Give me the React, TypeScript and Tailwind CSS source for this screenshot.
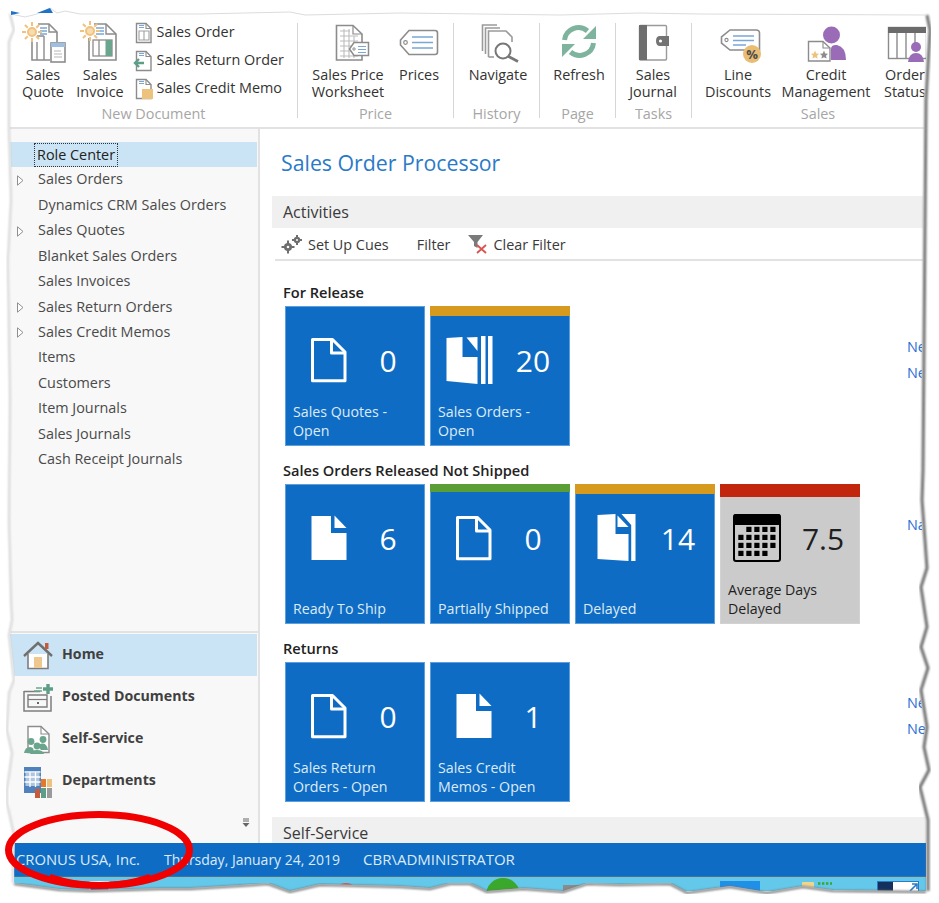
import type { ReactNode } from "react";

const navItems = [
  { label: "Role Center", active: true },
  { label: "Sales Orders", arrow: true },
  { label: "Dynamics CRM Sales Orders" },
  { label: "Sales Quotes", arrow: true },
  { label: "Blanket Sales Orders" },
  { label: "Sales Invoices" },
  { label: "Sales Return Orders", arrow: true },
  { label: "Sales Credit Memos", arrow: true },
  { label: "Items" },
  { label: "Customers" },
  { label: "Item Journals" },
  { label: "Sales Journals" },
  { label: "Cash Receipt Journals" },
];

const G = "#8c8c8c";
const B = "#7aa7d6";

function Sun({ x, y }: { x: number; y: number }) {
  const rays = [0, 45, 90, 135, 180, 225, 270, 315];
  return (
    <g stroke="#f0c27e" strokeWidth="2">
      {rays.map((r) => (
        <line key={r} x1={x} y1={y - 6} x2={x} y2={y - 10} transform={`rotate(${r} ${x} ${y})`} />
      ))}
      <circle cx={x} cy={y} r="4" fill="#f6dcae" />
    </g>
  );
}

function Box({ view, w = 48, h = 48, children }: { view: string; w?: number; h?: number; children: ReactNode }) {
  return (
    <svg width={w} height={h} viewBox={view} fill="none" className="shrink-0 overflow-visible">
      {children}
    </svg>
  );
}

function QuoteIcon() {
  return (
    <Box view="19 19 48 48">
      <path d="M38 24H49L57 32V42M50 60H32V38" stroke={G} strokeWidth="1.6" fill="#fff" />
      <path d="M49 24V32H57" stroke={G} strokeWidth="1.4" />
      <path d="M37 42V60M44 36V60M44 36H37" stroke={G} strokeWidth="1.4" />
      <path d="M40 28H47M40 31H47M40 34H47" stroke={B} strokeWidth="1.4" />
      <rect x="51" y="43" width="14" height="19" fill="#fff" stroke={G} strokeWidth="1.6" />
      <rect x="51" y="43" width="14" height="4" fill="#9cc0e4" />
      <path d="M54 51H61M54 54H62M54 57H62" stroke="#b5b5b5" strokeWidth="1.2" />
      <Sun x={32} y={32} />
    </Box>
  );
}

function InvoiceIcon() {
  return (
    <Box view="76 19 48 48">
      <path d="M94 24H106L116 34V60H89V38" stroke={G} strokeWidth="1.6" fill="#fff" />
      <path d="M106 24V34H116" stroke={G} strokeWidth="1.4" />
      <path d="M96 28H104M96 31H104M96 34H104" stroke={B} strokeWidth="1.4" />
      <rect x="93" y="40" width="19" height="16" stroke={G} strokeWidth="1.3" />
      <path d="M99 40V56" stroke={G} strokeWidth="1.3" />
      <rect x="105.5" y="40" width="6.5" height="16" fill="#6ba58e" />
      <Sun x={90} y={31} />
    </Box>
  );
}

function SmallDoc({ children }: { children?: ReactNode }) {
  return (
    <Box view="0 0 20 22" w={20} h={22}>
      <path d="M2.5 1.5H12L17 6.5V20.5H2.5Z" stroke={G} strokeWidth="1.4" fill="#fff" />
      <path d="M12 1.5V6.5H17" stroke={G} strokeWidth="1.1" />
      <path d="M5 3.5H10M5 5.5H10" stroke={B} strokeWidth="1.1" />
      {children}
    </Box>
  );
}

function WorksheetIcon() {
  return (
    <Box view="324 19 48 48">
      <path d="M336.5 25.5H353L362 34V60H336.5Z" stroke={G} strokeWidth="1.6" fill="#fff" />
      <path d="M353 25.5V34H362" stroke={G} strokeWidth="1.2" />
      <path d="M340 31H350M340 36H358M340 41H358M340 46H358M340 51H358M340 56H358M344 29V58M349 29V58M354 36V58" stroke="#bdbdbd" strokeWidth="1.1" />
      <path d="M354 42.5H368.5V55.5H354L349.5 49Z" stroke={G} strokeWidth="1.5" fill="#fff" />
      <circle cx="354" cy="49" r="1.2" stroke={G} />
      <path d="M358 46.5H366M358 49.5H366M358 52.5H366" stroke={B} strokeWidth="1.2" />
    </Box>
  );
}

function TagIcon() {
  return (
    <Box view="395 19 48 48">
      <path d="M409 30.5H435Q437.5 30.5 437.5 33V52Q437.5 54.5 435 54.5H409L400.5 45V40Z" stroke={G} strokeWidth="1.6" fill="#fff" />
      <circle cx="405.5" cy="42.5" r="1.8" stroke={G} strokeWidth="1.2" />
      <path d="M412 37H433M412 42.5H433M412 48H433" stroke={B} strokeWidth="1.5" />
    </Box>
  );
}

function NavigateIcon() {
  return (
    <Box view="474 19 48 48">
      <path d="M482.5 51V25H497M485.5 54V28H500M488.5 57V31H506L512 37V42" stroke="#9a9a9a" strokeWidth="1.6" />
      <path d="M488.5 57H494" stroke="#9a9a9a" strokeWidth="1.6" />
      <circle cx="503" cy="51" r="7.5" stroke="#777" strokeWidth="2" fill="#fff" />
      <path d="M508.5 56.5L518 61.5" stroke="#777" strokeWidth="2.8" />
    </Box>
  );
}

function RefreshIcon() {
  return (
    <Box view="555 19 48 48">
      <path d="M564.5 40A14 14 0 0 1 587.5 31" stroke="#7eb49e" strokeWidth="5" />
      <path d="M593.5 43A14 14 0 0 1 570.5 52" stroke="#7eb49e" strokeWidth="5" />
      <path d="M596 26V39H583Z" fill="#7eb49e" />
      <path d="M562 57V44H575Z" fill="#7eb49e" />
    </Box>
  );
}

function JournalIcon() {
  return (
    <Box view="630 19 48 48">
      <rect x="640.5" y="25.5" width="27" height="34.5" rx="1" stroke="#9a9a9a" strokeWidth="1.4" fill="#fff" />
      <rect x="640" y="25" width="8" height="35" fill="#6e6e6e" />
      <path d="M670 36H661Q657 36 657 41T661 46H670Z" fill="#737373" />
      <circle cx="661.5" cy="41" r="1.6" fill="#fff" />
    </Box>
  );
}

function DiscountIcon() {
  return (
    <Box view="714 19 48 48">
      <path d="M730 30H756Q759.5 30 759.5 33V50H730L721.5 43V37Z" stroke={G} strokeWidth="1.6" fill="#fff" />
      <circle cx="726.5" cy="40" r="1.6" stroke={G} strokeWidth="1.1" />
      <path d="M733 36H754M733 40.5H754M733 45H746" stroke={B} strokeWidth="1.4" />
      <circle cx="752" cy="54" r="9" fill="#e9bd74" />
      <text x="752" y="58.5" textAnchor="middle" fontSize="13" fontWeight="700" fill="#4d4d4d" fontFamily="Open Sans, sans-serif">%</text>
    </Box>
  );
}

function CreditIcon() {
  return (
    <Box view="802 19 48 48">
      <circle cx="831.5" cy="35" r="8.5" fill="#9a6cb8" />
      <path d="M831 60V49Q831 44.5 837 45Q846 47 846 60Z" fill="#9a6cb8" />
      <path d="M808.5 41.5H823L830 48V61H808.5Z" stroke={G} strokeWidth="1.4" fill="#fff" />
      <path d="M823 41.5V48H830" stroke={G} strokeWidth="1.1" />
      <path d="M815 50.5L816.2 53.5L819 53.8L817 55.8L817.6 58.5L815 57.2L812.4 58.5L813 55.8L811 53.8L813.8 53.5Z" fill="#ecc27d" />
      <path d="M824 50.5L825.2 53.5L828 53.8L826 55.8L826.6 58.5L824 57.2L821.4 58.5L822 55.8L820 53.8L822.8 53.5Z" fill="#8c8c8c" />
    </Box>
  );
}

function StatusIcon() {
  return (
    <Box view="881 19 48 48">
      <rect x="888.5" y="27.5" width="38" height="31" stroke={G} strokeWidth="1.4" fill="#fff" />
      <rect x="888" y="27" width="39" height="6" fill="#6b6b6b" />
      <path d="M897 33V58M906 33V58M915 33V44" stroke={G} strokeWidth="1.4" />
      <circle cx="916" cy="47" r="5" fill="#9a6cb8" />
      <path d="M908 62Q909 53 916 53T924 62Z" fill="#9a6cb8" />
    </Box>
  );
}

function HomeIcon() {
  return (
    <Box view="0 0 30 30" w={30} h={30}>
      <path d="M5 13V27.5H25V13" fill="#fff" stroke="#7d7d7d" strokeWidth="1.6" />
      <rect x="11" y="16" width="8" height="11" fill="#eec88f" />
      <path d="M1 15L15 2L29 15" stroke="#6f6f6f" strokeWidth="2.4" />
      <rect x="22" y="2" width="3.5" height="6" fill="#c85a3c" />
    </Box>
  );
}

function PostedIcon() {
  return (
    <Box view="0 0 30 30" w={30} h={30}>
      <path d="M1 8.5H17M1 8V28H28V13" stroke="#7d7d7d" strokeWidth="1.5" />
      <path d="M5 12H24V24H5Z" stroke="#7d7d7d" strokeWidth="1.4" />
      <path d="M5 16.5H24" stroke="#7d7d7d" strokeWidth="1.2" />
      <rect x="14" y="19" width="2" height="2" fill="#666" />
      <path d="M13 5H19M11 8H19" stroke="#6ba58e" strokeWidth="1.4" />
      <path d="M25 1V11M20 6H30" stroke="#5f9e86" strokeWidth="3.4" />
    </Box>
  );
}

function SelfServiceIcon() {
  return (
    <Box view="0 0 28 30" w={28} h={30}>
      <path d="M4 1.5H17L25 9V27.5H4Z" stroke="#8c8c8c" strokeWidth="1.4" fill="#fff" />
      <path d="M17 1.5V9H25" stroke="#8c8c8c" strokeWidth="1.1" />
      <circle cx="7" cy="16.5" r="3.4" fill="#6ba58e" />
      <circle cx="19" cy="14.5" r="3.4" fill="#6ba58e" />
      <circle cx="13" cy="21" r="3.4" fill="#6ba58e" />
      <path d="M0 28Q1 22 6 22T9 28ZM14 21Q15 18 19 18.5T24 25H17ZM6 29Q7 25 13 25T20 29Z" fill="#6ba58e" />
    </Box>
  );
}

function DepartmentsIcon() {
  return (
    <Box view="0 0 30 33" w={30} h={33}>
      <rect x="1" y="1" width="17" height="26" fill="#4f81bd" />
      <path d="M1.5 6H17.5M1.5 11H17.5M1.5 16H17.5M7 6V21M12.5 6V21" stroke="#fff" strokeWidth="1.3" />
      <rect x="2.5" y="7" width="14" height="13" fill="#fff" opacity=".55" />
      <rect x="18" y="13" width="5" height="8" fill="#e2792b" />
      <rect x="24" y="13" width="5" height="8" fill="#ecc27d" />
      <rect x="12" y="23" width="5" height="9" fill="#c85a3c" />
      <rect x="18" y="22" width="5" height="10" fill="#5f9e86" />
      <rect x="24" y="22" width="5" height="10" fill="#9a9a9a" />
    </Box>
  );
}

function TileIcon({ kind }: { kind: string }) {
  return (
    <svg width="87" height="52" viewBox="0 0 87 52" className="shrink-0 overflow-visible">
      {kind === "outline" && (
        <g fill="none" stroke="#fff" strokeWidth="3" strokeLinejoin="round">
          <path d="M26.5 3.5H46.5L59 16V44.8H26.5Z" />
          <path d="M45.5 3.5V17H59" />
        </g>
      )}
      {kind === "solid" && (
        <g fill="#fff">
          <path d="M25.5 2H45V19H60.5V46H25.5Z" />
          <path d="M48.5 1.5L60.5 14H48.5Z" />
        </g>
      )}
      {kind === "stack" && (
        <g fill="#fff">
          <path d="M15.5 2L31.5 1V21H46.5V48L15.5 45Z" />
          <path d="M35.5 1.5L46.5 1V15Z" />
          <rect x="50" y="0" width="4.5" height="48" />
          <rect x="57" y="0" width="4.5" height="48" />
        </g>
      )}
      {kind === "delayed" && (
        <g fill="#fff">
          <path d="M21.5 1L39.5 0V20H52.5V47L21.5 45Z" />
          <path d="M41.5 1.5L52.5 13H41.5Z" />
          <path d="M45.5 0H59.5V47H55.2V11Z" />
        </g>
      )}
      {kind === "calendar" && (
        <g>
          <rect x="13" y="1" width="46" height="46" rx="2" fill="#cbcbcb" stroke="#000" strokeWidth="2" />
          <rect x="12.5" y="0" width="47" height="11" rx="2" fill="#000" />
          {[
            [27.8, 35.8, 43.8, 51.8],
            [19.8, 27.8, 35.8, 43.8, 51.8],
            [19.8, 27.8, 35.8, 43.8, 51.8],
            [19.8, 27.8, 35.8, 43.8],
          ].map((row, r) =>
            row.map((x) => <rect key={`${r}-${x}`} x={x - 2.5} y={12.8 + r * 8} width="5.2" height="5.2" fill="#000" />),
          )}
        </g>
      )}
    </svg>
  );
}

function Tile({ kind, value, label, bar, gray }: { kind: string; value: string; label: ReactNode; bar?: ReactNode; gray?: boolean }) {
  return (
    <div
      className={`relative flex h-[140px] w-[140px] flex-col border ${
        gray ? "border-[#d2d2d2] bg-[#cbcbcb] text-[#1f1f1f]" : "border-[#5b9fdc] bg-[#0f6cc4] text-white"
      }`}
    >
      {bar}
      <div className="flex pt-[29px]">
        <TileIcon kind={kind} />
        <div className="mt-[2px] flex w-[30px] justify-center text-[30px] leading-[46px] whitespace-nowrap">{value}</div>
      </div>
      <div className={`mt-auto px-[7px] pb-[5px] text-[14.2px] leading-[19px] ${gray ? "" : "text-[#dcebf8]"}`}>{label}</div>
    </div>
  );
}

function Bar({ className }: { className: string }) {
  return <div className={`absolute inset-x-[-1px] top-[-1px] ${className}`} />;
}

function BigButton({ w, icon, label }: { w: string; icon: ReactNode; label: ReactNode }) {
  return (
    <div className={`flex flex-col items-center text-center whitespace-nowrap ${w}`}>
      <div className="flex h-[48px] items-start justify-center">{icon}</div>
      <div className="text-[14.4px] leading-[16.5px] text-[#333]">{label}</div>
    </div>
  );
}

function Group({ w, pl, label, children }: { w: string; pl?: string; label: string; children: ReactNode }) {
  return (
    <>
      <div className={`flex shrink-0 flex-col ${w}`}>
        <div className={`flex h-[91px] pt-[5px] ${pl ?? ""}`}>{children}</div>
        <div className="text-center text-[14.4px] leading-[18px] text-[#a6a6a6]">{label}</div>
      </div>
      <div className="my-[9px] w-px shrink-0 bg-[#d6d6d6]" />
    </>
  );
}

function SmallItem({ icon, label }: { icon: ReactNode; label: string }) {
  return (
    <div className="flex h-[28px] items-center gap-[3px] text-[14.4px] whitespace-nowrap text-[#333]">
      {icon}
      <span className="pb-[2px]">{label}</span>
    </div>
  );
}

function Section({ title, links, children }: { title: string; links: string[]; children: ReactNode }) {
  return (
    <div>
      <div className="-ml-[2px] h-[24px] text-[14.6px] leading-[20px] font-semibold text-[#222]">{title}</div>
      <div className="flex">
        <div className="flex w-[622px] shrink-0 gap-[5px]">{children}</div>
        <div className="pt-[28px] text-[14.4px] leading-[25.5px] whitespace-nowrap text-[#2a6fd6]">
          {links.map((l, i) => (
            <div key={i}>{l}</div>
          ))}
        </div>
      </div>
    </div>
  );
}

function BottomNav({ icon, label, active }: { icon: ReactNode; label: string; active?: boolean }) {
  return (
    <div className={`flex h-[42px] w-[247px] items-center text-[14.2px] font-bold text-[#404040] ${active ? "bg-[#cbe4f5]" : ""}`}>
      <div className="flex w-[52px] justify-center pt-[2px] pl-[3px]">{icon}</div>
      <span className="pb-[3px]">{label}</span>
    </div>
  );
}

const leftEdge = "11,14 15,30 13,34 10,42 10,130 12,200 9,260 11,400 10,520 12,600 13,620 10,635 15,680 10,693 8,730 13,753 8,790 8,803 15,835 14,870 14,883";
const bottomEdge = "14,883 60,889 90,890 130,889 160,888 190,888 240,885 268,883 290,891 320,884 400,886 430,888 450,883 470,883 487,891 523,888 563,891 587,883 620,884 670,883 687,892 730,886 767,892 803,886 833,890 926,891";
const rightEdge = "926,891 926,820 918,787 927,770 922,747 925,727 919,690 926,668 919,647 925,627 919,587 925,568 920,500 921,470 924,100 928,30 925,15";
const topEdge = "925,15 700,14 640,13 560,15 400,13 305,15 290,12 200,14 80,14 65,11 57,13 50,8 37,14 25,17 11,14";

function TornEdges() {
  return (
    <svg width="939" height="903" viewBox="0 0 939 903" fill="none" className="pointer-events-none absolute inset-0">
      <defs>
        <filter id="soft">
          <feGaussianBlur stdDeviation="1" />
        </filter>
      </defs>
      <path
        fillRule="evenodd"
        fill="#fff"
        d={`M0 0H939V903H0Z M${leftEdge.split(" ").join(" L")} L${bottomEdge.split(" ").join(" L")} L${rightEdge.split(" ").join(" L")} L${topEdge.split(" ").join(" L")}Z`}
      />
      <polyline points={rightEdge} stroke="#707070" strokeWidth="3" filter="url(#soft)" transform="translate(2 0)" />
      <polyline points={bottomEdge} stroke="#707070" strokeWidth="2" filter="url(#soft)" transform="translate(0 1)" />
      <polyline points={leftEdge} stroke="#c4c4c4" strokeWidth="1.5" filter="url(#soft)" transform="translate(-1 0)" />
      <polyline points={topEdge} stroke="#dcdcdc" strokeWidth="1" />
      <path d="M11 11L20 13L11 15Z" fill="#1e73c8" />
      <path d="M37 13L50 8L53 13Z" fill="#1e73c8" />
      <ellipse cx="99" cy="850" rx="90.5" ry="35.5" stroke="#f00000" strokeWidth="7" />
      <path d="M50 876Q100 893 150 876" stroke="#f00000" strokeWidth="4" />
    </svg>
  );
}

function TaskbarBits() {
  return (
    <svg width="916" height="15" viewBox="10 876 916 15" className="block">
      <rect x="90" y="880.5" width="19" height="14" fill="#1e7fd0" stroke="#e8f4fb" />
      <circle cx="346" cy="893" r="11" fill="#d9534f" />
      <circle cx="503" cy="894" r="17" fill="#3aa82a" />
      <rect x="563" y="884" width="20" height="8" fill="#8b8b8b" />
      <rect x="720" y="880" width="40" height="14" fill="#1e90e8" />
      <rect x="802" y="881" width="12" height="6" rx="1" fill="#f0d58a" />
      <path d="M818 882.5H832" stroke="#3aa82a" strokeWidth="2.4" strokeDasharray="2.4 1.6" />
      <rect x="877.5" y="880.5" width="41" height="12" fill="#fff" stroke="#2a7ac8" />
      <rect x="878" y="881" width="15" height="11" fill="#14305c" />
      <path d="M910 890L917 883M912 883H917V888" stroke="#2a7ac8" strokeWidth="1.6" fill="none" />
    </svg>
  );
}

export default function App() {
  return (
    <div className="relative h-[903px] w-[939px] overflow-hidden bg-white font-['Open_Sans',sans-serif]">
      <div className="mt-[14px] ml-[10px] flex h-[877px] w-[916px] flex-col overflow-hidden bg-white">
        {/* Ribbon */}
        <div className="flex h-[115px] shrink-0 border-b-2 border-[#e2e2e2]">
          <Group w="w-[287px]" pl="pl-[4.5px]" label="New Document">
            <BigButton w="w-[57px]" icon={<QuoteIcon />} label={<>Sales<br />Quote</>} />
            <BigButton w="w-[57px]" icon={<InvoiceIcon />} label={<>Sales<br />Invoice</>} />
            <div className="ml-[5px] flex flex-col">
              <SmallItem
                label="Sales Order"
                icon={
                  <SmallDoc>
                    <path d="M5 9H15V18H5ZM10 9V18" stroke="#a0a0a0" strokeWidth="1.1" fill="none" />
                  </SmallDoc>
                }
              />
              <SmallItem
                label="Sales Return Order"
                icon={
                  <SmallDoc>
                    <path d="M1 13H10M5 9L1 13L5 17" stroke="#5f9e86" strokeWidth="2.4" fill="none" />
                  </SmallDoc>
                }
              />
              <SmallItem
                label="Sales Credit Memo"
                icon={
                  <SmallDoc>
                    <rect x="8" y="11" width="11" height="10" fill="#ecc27d" />
                  </SmallDoc>
                }
              />
            </div>
          </Group>
          <Group w="w-[155px]" pl="pl-[10px]" label="Price">
            <BigButton w="w-[80px]" icon={<WorksheetIcon />} label={<>Sales Price<br />Worksheet</>} />
            <BigButton w="w-[62px]" icon={<TagIcon />} label="Prices" />
          </Group>
          <Group w="w-[85px]" pl="pl-[9px]" label="History">
            <BigButton w="w-[70px]" icon={<NavigateIcon />} label="Navigate" />
          </Group>
          <Group w="w-[75px]" pl="pl-[9px]" label="Page">
            <BigButton w="w-[60px]" icon={<RefreshIcon />} label="Refresh" />
          </Group>
          <Group w="w-[75px]" pl="pl-[7px]" label="Tasks">
            <BigButton w="w-[60px]" icon={<JournalIcon />} label={<>Sales<br />Journal</>} />
          </Group>
          <Group w="w-[252px]" pl="pl-[8px]" label="Sales">
            <BigButton w="w-[76px]" icon={<DiscountIcon />} label={<>Line<br />Discounts</>} />
            <BigButton w="w-[100px]" icon={<CreditIcon />} label={<>Credit<br />Management</>} />
            <BigButton w="w-[58px]" icon={<StatusIcon />} label={<>Order<br />Status</>} />
          </Group>
        </div>

        <div className="flex h-[714px] shrink-0 overflow-hidden">
          {/* Left navigation */}
          <div className="flex w-[250px] shrink-0 flex-col border-r-2 border-[#e2e2e2] bg-[#f8f8f8] pt-[13px]">
            {navItems.map((item) => (
              <div
                key={item.label}
                className={`flex h-[25.45px] w-[247px] items-center text-[14.4px] whitespace-nowrap text-[#4a4a4a] ${item.active ? "bg-[#cbe4f5] text-[#222]" : ""}`}
              >
                <div className="w-[28px] pl-[7px]">
                  {item.arrow && (
                    <svg width="7" height="11" viewBox="0 0 7 11" className="block">
                      <path d="M.5.8L6 5.5L.5 10.2Z" fill="#fff" stroke="#8f8f8f" />
                    </svg>
                  )}
                </div>
                <span className={item.active ? "-ml-[4px] border border-dotted border-[#333] px-[2px]" : "pb-[2px]"}>{item.label}</span>
              </div>
            ))}
            <div className="mt-auto border-t-2 border-[#e2e2e2] pt-[1px]">
              <BottomNav active icon={<HomeIcon />} label="Home" />
              <BottomNav icon={<PostedIcon />} label="Posted Documents" />
              <BottomNav icon={<SelfServiceIcon />} label="Self-Service" />
              <BottomNav icon={<DepartmentsIcon />} label="Departments" />
              <div className="flex h-[41px] items-center justify-end pr-[8px]">
                <svg width="8" height="9" viewBox="0 0 8 9">
                  <path d="M1 1H7M1 3H7" stroke="#666" />
                  <path d="M.5 5H7.5L4 9Z" fill="#666" />
                </svg>
              </div>
            </div>
          </div>

          {/* Role center */}
          <div className="min-w-0 flex-1 bg-white">
            <div className="pt-[20px] pl-[21px] text-[21.3px] leading-[28px] text-[#2a7ac8]">Sales Order Processor</div>
            <div className="mt-[19px] ml-[12px] h-[32px] bg-[#f0f0f0] pl-[11px] text-[16px] leading-[32px] text-[#3a3a3a]">Activities</div>
            <div className="ml-[15px] flex h-[33px] items-center border-b-2 border-[#e2e2e2] pl-[6px] text-[14.4px] text-[#3a3a3a]">
              <svg width="22" height="20" viewBox="0 0 22 20" className="mr-[5px]">
                <g fill="#6e6e6e">
                  <circle cx="7" cy="13" r="4" />
                  <circle cx="16" cy="6" r="3.2" />
                  <path d="M6 6.5H8V19.5H6ZM.5 12H13.5V14H.5ZM15 1H17V11H15ZM11 5H21V7H11Z" />
                </g>
                <circle cx="7" cy="13" r="1.3" fill="#fff" />
                <circle cx="16" cy="6" r="1" fill="#fff" />
              </svg>
              <span className="pt-[3px]">Set Up Cues</span>
              <span className="ml-[28px] pt-[3px]">Filter</span>
              <svg width="20" height="20" viewBox="0 0 20 20" className="mr-[6px] ml-[17px]">
                <path d="M0 1H15L9.5 8V14L6 12V8Z" fill="#7a7a7a" />
                <path d="M9 11L18 19M18 11L9 19" stroke="#d9534f" strokeWidth="1.8" />
              </svg>
              <span className="pt-[3px]">Clear Filter</span>
            </div>

            <div className="mt-[21px] flex flex-col gap-[14px] pl-[25px]">
              <Section title="For Release" links={["Ne", "Ne"]}>
                <Tile kind="outline" value="0" label={<>Sales Quotes -<br />Open</>} />
                <Tile kind="stack" value="20" label={<>Sales Orders -<br />Open</>} bar={<Bar className="h-[10px] bg-[#d69a1e]" />} />
              </Section>
              <Section title="Sales Orders Released Not Shipped" links={["Na"]}>
                <Tile kind="solid" value="6" label="Ready To Ship" />
                <Tile kind="outline" value="0" label="Partially Shipped" bar={<Bar className="h-[8px] bg-[#5a9e35]" />} />
                <Tile kind="delayed" value="14" label="Delayed" bar={<Bar className="h-[10px] bg-[#d69a1e]" />} />
                <Tile kind="calendar" value="7.5" gray label={<>Average Days<br />Delayed</>} bar={<Bar className="h-[13px] bg-[#c2260c]" />} />
              </Section>
              <Section title="Returns" links={["Ne", "Ne"]}>
                <Tile kind="outline" value="0" label={<>Sales Return<br />Orders - Open</>} />
                <Tile kind="solid" value="1" label={<>Sales Credit<br />Memos - Open</>} />
              </Section>
            </div>

            <div className="mt-[15px] ml-[12px] h-[26px] bg-[#f0f0f0] pl-[11px] text-[16px] leading-[32px] text-[#3a3a3a]">Self-Service</div>
          </div>
        </div>

        {/* Status bar */}
        <div className="flex h-[33px] shrink-0 items-center bg-[#0f6cc4] pl-[6px] text-[14px] whitespace-nowrap text-[#dcebf8]">
          <span className="w-[148px] text-[14.8px]">CRONUS USA, Inc.</span>
          <span className="w-[199px]">Thursday, January 24, 2019</span>
          <span className="text-[15px]">CBR\ADMINISTRATOR</span>
        </div>
        <div className="h-[15px] shrink-0 overflow-hidden border-t border-[#4f6f88] bg-[#63c8ea]">
          <TaskbarBits />
        </div>
      </div>
      <TornEdges />
    </div>
  );
}
